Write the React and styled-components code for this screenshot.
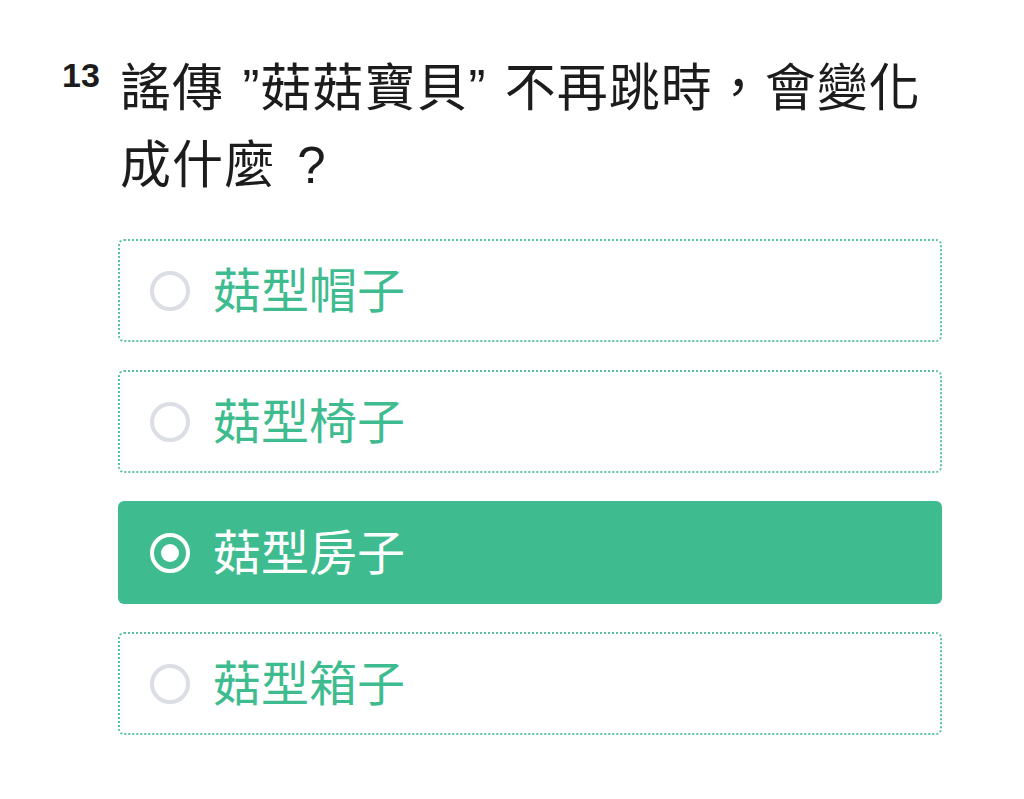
import styled, { createGlobalStyle } from "styled-components";

const GlobalStyle = createGlobalStyle`
  body {
    margin: 0;
    background: #ffffff;
    font-family: "Noto Sans CJK TC", "Noto Sans", sans-serif;
  }
`;

const Page = styled.div`
  padding: 48px 0 0 62px;
  width: 880px;
`;

const QuestionRow = styled.div`
  display: flex;
  align-items: flex-start;
`;

const QuestionNumber = styled.div`
  width: 58px;
  flex-shrink: 0;
  padding-top: 8px;
  font-family: "Liberation Sans", Arial, sans-serif;
  font-size: 34px;
  font-weight: 700;
  color: #1c1c1c;
`;

const QuestionText = styled.h2`
  margin: 0;
  font-size: 51px;
  font-weight: 400;
  line-height: 72px;
  letter-spacing: 1px;
  word-spacing: 6px;
  color: #1c1c1c;
  width: 812px;
`;

const Latin = styled.span`
  font-family: "Liberation Sans", Arial, sans-serif;
`;

const Options = styled.div`
  display: flex;
  flex-direction: column;
  gap: 28px;
  margin: 37px 0 0 56px;
  width: 824px;
`;

const Option = styled.label`
  display: flex;
  align-items: center;
  box-sizing: border-box;
  height: 103px;
  padding-left: 30px;
  border-radius: 6px;
  border: 2px dotted ${props => (props.$checked ? "#3fbc8f" : "#5cc49d")};
  background: ${props => (props.$checked ? "#3fbc8f" : "#ffffff")};
  color: ${props => (props.$checked ? "#ffffff" : "#3fbc8f")};
  font-size: 48px;
  cursor: pointer;
`;

const Radio = styled.span`
  width: 40px;
  height: 40px;
  box-sizing: border-box;
  border-radius: 50%;
  border: 4px solid ${props => (props.$checked ? "#ffffff" : "#dcdee6")};
  display: flex;
  align-items: center;
  justify-content: center;
  margin-right: 23px;
  flex-shrink: 0;

  &::after {
    content: "";
    display: ${props => (props.$checked ? "block" : "none")};
    width: 18px;
    height: 18px;
    border-radius: 50%;
    background: #ffffff;
  }
`;

const OptionLabel = styled.span`
  line-height: 1;
  margin-bottom: 8px;
`;

const choices = ["菇型帽子", "菇型椅子", "菇型房子", "菇型箱子"];

const App = () => {
  const selected = 2;
  return (
    <Page>
      <GlobalStyle />
      <QuestionRow>
        <QuestionNumber>13</QuestionNumber>
        <QuestionText>
          謠傳 <Latin>”</Latin>菇菇寶貝<Latin>”</Latin> 不再跳時，會變化成什麼<Latin> ?</Latin>
        </QuestionText>
      </QuestionRow>
      <Options>
        {choices.map((c, i) => (
          <Option key={c} $checked={i === selected}>
            <Radio $checked={i === selected} />
            <OptionLabel>{c}</OptionLabel>
          </Option>
        ))}
      </Options>
    </Page>
  );
};

export default App;
